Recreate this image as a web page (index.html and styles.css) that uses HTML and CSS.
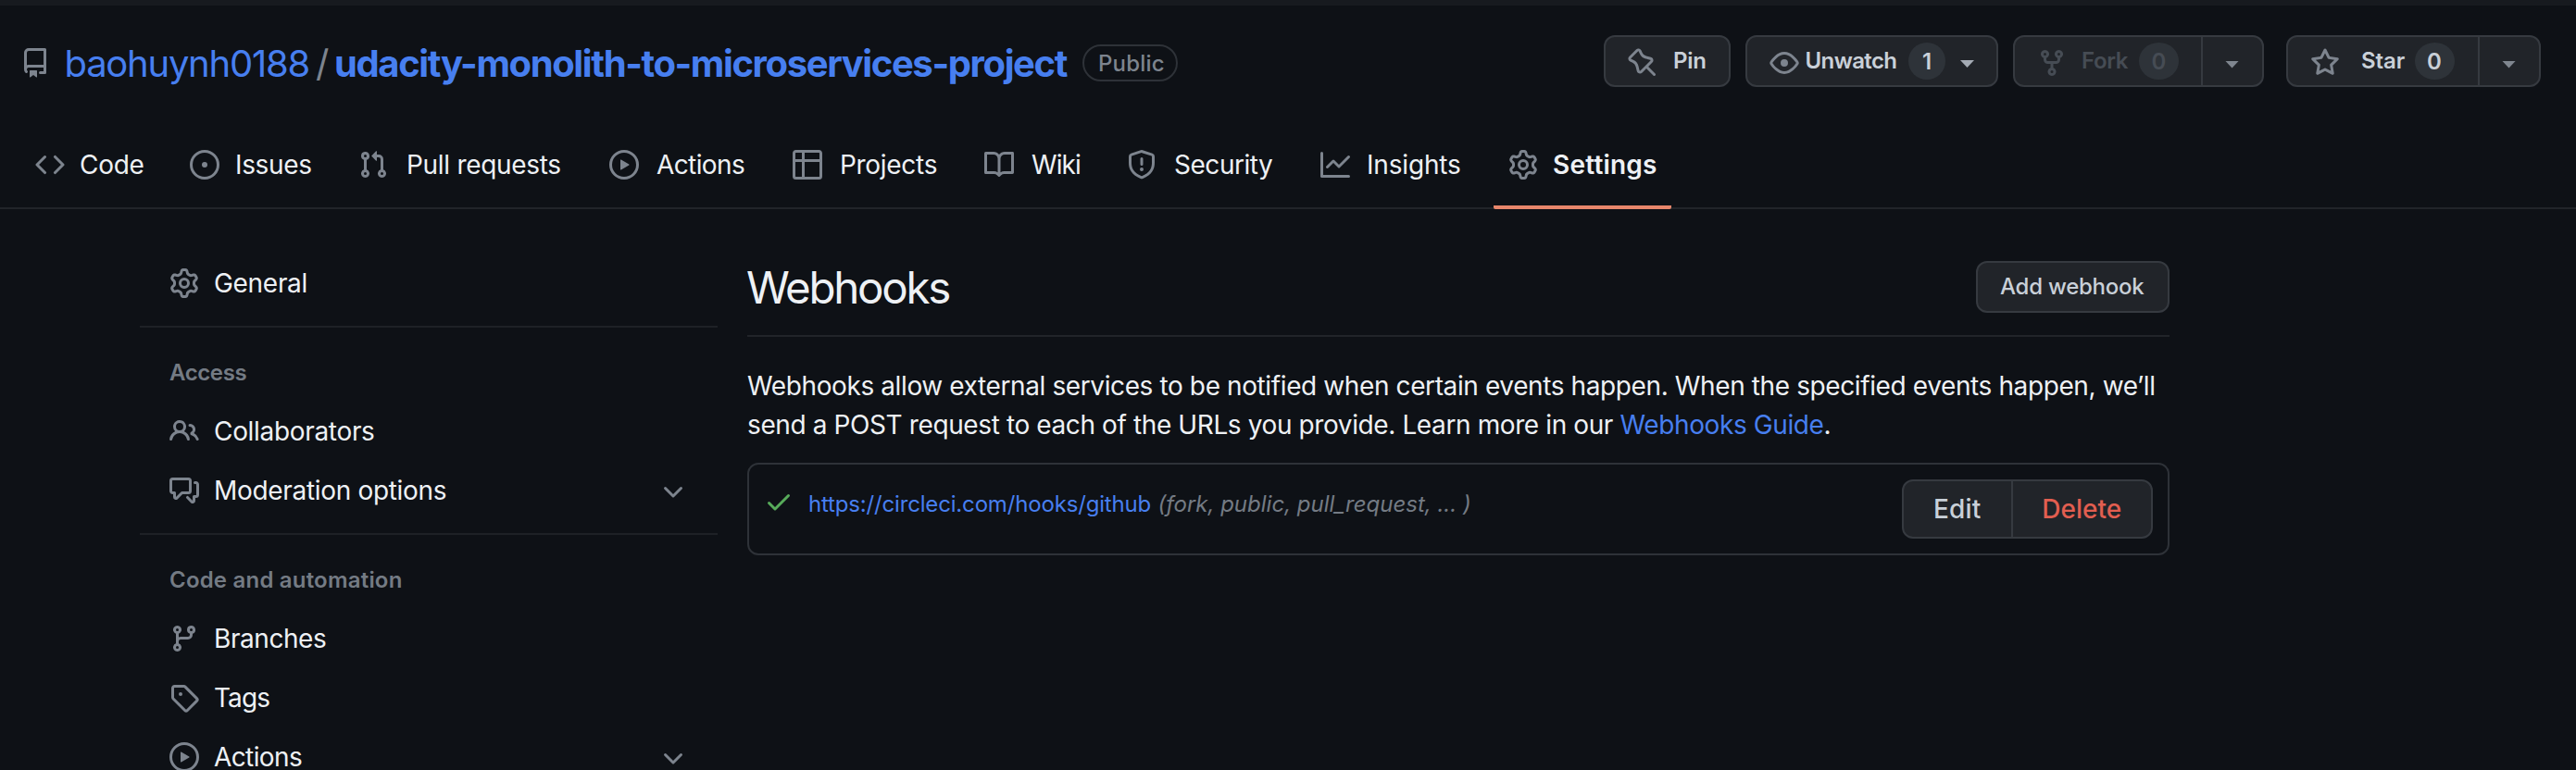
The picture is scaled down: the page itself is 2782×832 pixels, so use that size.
FILE: index.html
```html
<!DOCTYPE html>
<html lang="en">
<head>
<meta charset="utf-8">
<title>Webhooks settings</title>
<link rel="stylesheet" href="styles.css">
</head>
<body>
<svg class="sprite" aria-hidden="true">
  <symbol id="repo" viewBox="0 0 16 16"><path d="M2 2.5A2.5 2.5 0 014.5 0h8.75a.75.75 0 01.75.75v12.5a.75.75 0 01-.75.75h-2.5a.75.75 0 110-1.5h1.75v-2h-8a1 1 0 00-.714 1.7.75.75 0 01-1.072 1.05A2.495 2.495 0 012 11.5v-9zm10.5-1V9h-8c-.356 0-.694.074-1 .208V2.5a1 1 0 011-1h8zM5 12.25v3.25a.25.25 0 00.4.2l1.45-1.087a.25.25 0 01.3 0L8.6 15.7a.25.25 0 00.4-.2v-3.25a.25.25 0 00-.25-.25h-3.5a.25.25 0 00-.25.25z"/></symbol>
  <symbol id="code" viewBox="0 0 16 16"><path d="M4.72 3.22a.75.75 0 011.06 1.06L2.06 8l3.72 3.72a.75.75 0 11-1.06 1.06L.47 8.53a.75.75 0 010-1.06l4.25-4.25zm6.56 0a.75.75 0 10-1.06 1.06L13.94 8l-3.72 3.72a.75.75 0 101.06 1.06l4.25-4.25a.75.75 0 000-1.06l-4.25-4.25z"/></symbol>
  <symbol id="issue" viewBox="0 0 16 16"><path d="M8 9.5a1.5 1.5 0 100-3 1.5 1.5 0 000 3z"/><path d="M8 0a8 8 0 100 16A8 8 0 008 0zM1.5 8a6.5 6.5 0 1113 0 6.5 6.5 0 01-13 0z"/></symbol>
  <symbol id="pull" viewBox="0 0 16 16"><path d="M7.177 3.073L9.573.677A.25.25 0 0110 .854v4.792a.25.25 0 01-.427.177L7.177 3.427a.25.25 0 010-.354zM3.75 2.5a.75.75 0 100 1.5.75.75 0 000-1.5zm-2.25.75a2.25 2.25 0 113 2.122v5.256a2.251 2.251 0 11-1.5 0V5.372A2.25 2.25 0 011.5 3.25zM11 2.5h-1V4h1a1 1 0 011 1v5.628a2.251 2.251 0 101.5 0V5A2.5 2.5 0 0011 2.5zm1 10.25a.75.75 0 111.5 0 .75.75 0 01-1.5 0zM3.75 12a.75.75 0 100 1.5.75.75 0 000-1.5z"/></symbol>
  <symbol id="play" viewBox="0 0 16 16"><path d="M1.5 8a6.5 6.5 0 1113 0 6.5 6.5 0 01-13 0zM8 0a8 8 0 100 16A8 8 0 008 0zM6.379 5.227A.25.25 0 006 5.442v5.117a.25.25 0 00.379.214l4.264-2.559a.25.25 0 000-.428L6.379 5.227z"/></symbol>
  <symbol id="table" viewBox="0 0 16 16"><path d="M0 1.75C0 .784.784 0 1.75 0h12.5C15.216 0 16 .784 16 1.75v12.5A1.75 1.75 0 0114.25 16H1.75A1.75 1.75 0 010 14.25V1.75zM6.5 6.5v8h7.75a.25.25 0 00.25-.25V6.5h-8zm8-1.5V1.75a.25.25 0 00-.25-.25H6.5V5h8zm-13 1.5v7.75c0 .138.112.25.25.25H5v-8H1.5zM5 5V1.5H1.75a.25.25 0 00-.25.25V5H5z"/></symbol>
  <symbol id="book" viewBox="0 0 16 16"><path d="M0 1.75A.75.75 0 01.75 1h4.253c1.227 0 2.317.59 3 1.501A3.744 3.744 0 0111.006 1h4.245a.75.75 0 01.75.75v10.5a.75.75 0 01-.75.75h-4.507a2.25 2.25 0 00-1.591.659l-.622.621a.75.75 0 01-1.06 0l-.622-.621A2.25 2.25 0 005.258 13H.75a.75.75 0 01-.75-.75V1.75zm8.755 3a2.25 2.25 0 012.25-2.25H14.5v9h-3.757c-.71 0-1.4.201-1.992.572l.004-7.322zm-1.504 7.324l.004-5.073-.002-2.253A2.25 2.25 0 005.003 2.5H1.5v9h3.757a3.75 3.75 0 011.994.574z"/></symbol>
  <symbol id="shield" viewBox="0 0 16 16"><path d="M7.467.133a1.75 1.75 0 011.066 0l5.25 1.68A1.75 1.75 0 0115 3.48V7c0 1.566-.32 3.182-1.303 4.682-.983 1.498-2.585 2.813-5.032 3.855a1.7 1.7 0 01-1.33 0c-2.447-1.042-4.049-2.357-5.032-3.855C1.32 10.182 1 8.566 1 7V3.48a1.75 1.75 0 011.217-1.667l5.25-1.68zm.61 1.429a.25.25 0 00-.153 0l-5.25 1.68a.25.25 0 00-.174.238V7c0 1.358.275 2.666 1.057 3.86.784 1.194 2.121 2.34 4.366 3.297a.2.2 0 00.154 0c2.245-.956 3.582-2.104 4.366-3.298C13.225 9.666 13.5 8.36 13.5 7V3.48a.25.25 0 00-.174-.237l-5.25-1.68zM9 10.5a1 1 0 11-2 0 1 1 0 012 0zm-.25-5.75a.75.75 0 10-1.5 0v3a.75.75 0 001.5 0v-3z"/></symbol>
  <symbol id="graph" viewBox="0 0 16 16"><path d="M1.5 1.75a.75.75 0 00-1.5 0v12.5c0 .414.336.75.75.75h14.5a.75.75 0 000-1.5H1.5V1.75zm14.28 2.53a.75.75 0 00-1.06-1.06L10 7.94 7.53 5.47a.75.75 0 00-1.06 0L3.22 8.72a.75.75 0 001.06 1.06L7 7.06l2.47 2.47a.75.75 0 001.06 0l5.25-5.25z"/></symbol>
  <symbol id="gear" viewBox="0 0 16 16"><path d="M8 0a8.2 8.2 0 01.701.031C9.444.095 9.99.645 10.16 1.29l.288 1.107c.018.066.079.158.212.224.231.114.454.243.668.386.123.082.233.09.299.071l1.103-.303c.644-.176 1.392.021 1.82.63.27.385.506.792.704 1.218.315.675.111 1.422-.364 1.891l-.814.806c-.049.048-.098.147-.088.294.016.257.016.515 0 .772-.01.147.038.246.088.294l.814.806c.475.469.679 1.216.364 1.891a7.977 7.977 0 01-.704 1.217c-.428.61-1.176.807-1.82.63l-1.102-.302c-.067-.019-.177-.011-.3.071a5.909 5.909 0 01-.668.386c-.133.066-.194.158-.211.224l-.29 1.106c-.168.646-.715 1.196-1.458 1.26a8.006 8.006 0 01-1.402 0c-.743-.064-1.289-.614-1.458-1.26l-.289-1.106c-.018-.066-.079-.158-.212-.224a5.738 5.738 0 01-.668-.386c-.123-.082-.233-.09-.299-.071l-1.103.303c-.644.176-1.392-.021-1.82-.63a8.12 8.12 0 01-.704-1.218c-.315-.675-.111-1.422.363-1.891l.815-.806c.05-.048.098-.147.088-.294a6.214 6.214 0 010-.772c.01-.147-.038-.246-.088-.294l-.815-.806C.635 6.045.431 5.298.746 4.623a7.92 7.92 0 01.704-1.217c.428-.61 1.176-.807 1.82-.63l1.102.302c.067.019.177.011.3-.071.214-.143.437-.272.668-.386.133-.066.194-.158.211-.224l.29-1.106C6.009.645 6.556.095 7.299.03 7.53.01 7.764 0 8 0zm-.571 1.525c-.036.003-.108.036-.137.146l-.289 1.105c-.147.561-.549.967-.998 1.189-.173.086-.34.183-.5.29-.417.278-.97.423-1.529.27l-1.103-.303c-.109-.03-.175.016-.195.045-.22.312-.412.644-.573.99-.014.031-.021.11.059.19l.815.806c.411.406.562.957.53 1.456a4.709 4.709 0 000 .582c.032.499-.119 1.05-.53 1.456l-.815.806c-.081.08-.073.159-.059.19.162.346.353.677.573.989.02.03.085.076.195.046l1.102-.303c.56-.153 1.113-.008 1.53.27.161.107.328.204.501.29.447.222.85.629.997 1.189l.289 1.105c.029.109.101.143.137.146a6.6 6.6 0 001.142 0c.036-.003.108-.036.137-.146l.289-1.105c.147-.561.549-.967.998-1.189.173-.086.34-.183.5-.29.417-.278.97-.423 1.529-.27l1.103.303c.109.029.175-.016.195-.045.22-.313.411-.644.573-.99.014-.031.021-.11-.059-.19l-.815-.806c-.411-.406-.562-.957-.53-1.456a4.709 4.709 0 000-.582c-.032-.499.119-1.05.53-1.456l.815-.806c.081-.08.073-.159.059-.19a6.464 6.464 0 00-.573-.989c-.02-.03-.085-.076-.195-.046l-1.102.303c-.56.153-1.113.008-1.53-.27a4.44 4.44 0 00-.501-.29c-.447-.222-.85-.629-.997-1.189l-.289-1.105c-.029-.11-.101-.143-.137-.146a6.6 6.6 0 00-1.142 0zM11 8a3 3 0 11-6 0 3 3 0 016 0zM9.5 8a1.5 1.5 0 11-3.001.001A1.5 1.5 0 019.5 8z"/></symbol>
  <symbol id="pin" viewBox="0 0 16 16"><path d="M4.456.734a1.75 1.75 0 012.826.504l.613 1.327a3.081 3.081 0 002.084 1.707l2.454.584c1.332.317 1.8 1.972.832 2.94L11.06 10l3.72 3.72a.75.75 0 11-1.061 1.06L10 11.06l-2.204 2.205c-.968.968-2.623.5-2.94-.832l-.584-2.454a3.081 3.081 0 00-1.707-2.084l-1.327-.613a1.75 1.75 0 01-.504-2.826L4.456.734zM5.92 1.866a.25.25 0 00-.404-.072L1.794 5.516a.25.25 0 00.072.404l1.328.613A4.582 4.582 0 015.73 9.63l.584 2.454a.25.25 0 00.42.12l5.47-5.47a.25.25 0 00-.12-.42L9.63 5.73a4.581 4.581 0 01-3.098-2.537L5.92 1.866z"/></symbol>
  <symbol id="eye" viewBox="0 0 16 16"><path d="M1.679 7.932c.412-.621 1.242-1.75 2.366-2.717C5.175 4.242 6.527 3.5 8 3.5c1.473 0 2.824.742 3.955 1.715 1.124.967 1.954 2.096 2.366 2.717a.119.119 0 010 .136c-.412.621-1.242 1.75-2.366 2.717C10.825 11.758 9.473 12.5 8 12.5c-1.473 0-2.824-.742-3.955-1.715C2.92 9.818 2.09 8.69 1.679 8.068a.119.119 0 010-.136zM8 2c-1.981 0-3.67.992-4.933 2.078C1.797 5.169.88 6.423.43 7.1a1.619 1.619 0 000 1.798c.45.678 1.367 1.932 2.637 3.024C4.329 13.008 6.019 14 8 14c1.981 0 3.67-.992 4.933-2.078 1.27-1.091 2.187-2.345 2.637-3.023a1.619 1.619 0 000-1.798c-.45-.678-1.367-1.932-2.637-3.023C11.671 2.992 9.981 2 8 2zm0 8a2 2 0 100-4 2 2 0 000 4z"/></symbol>
  <symbol id="fork" viewBox="0 0 16 16"><path d="M5 3.25a.75.75 0 11-1.5 0 .75.75 0 011.5 0zm0 2.122a2.25 2.25 0 10-1.5 0v.878A2.25 2.25 0 005.75 8.5h1.5v2.128a2.251 2.251 0 101.5 0V8.5h1.5a2.25 2.25 0 002.25-2.25v-.878a2.25 2.25 0 10-1.5 0v.878a.75.75 0 01-.75.75h-4.5A.75.75 0 015 6.25v-.878zm3.75 7.378a.75.75 0 11-1.5 0 .75.75 0 011.5 0zm3-8.75a.75.75 0 100-1.5.75.75 0 000 1.5z"/></symbol>
  <symbol id="star" viewBox="0 0 16 16"><path d="M8 .25a.75.75 0 01.673.418l1.882 3.815 4.21.612a.75.75 0 01.416 1.279l-3.046 2.97.719 4.192a.75.75 0 01-1.088.791L8 12.347l-3.766 1.98a.75.75 0 01-1.088-.79l.72-4.194L.818 6.374a.75.75 0 01.416-1.28l4.21-.611L7.327.668A.75.75 0 018 .25zm0 2.445L6.615 5.5a.75.75 0 01-.564.41l-3.097.45 2.24 2.184a.75.75 0 01.216.664l-.528 3.084 2.769-1.456a.75.75 0 01.698 0l2.77 1.456-.53-3.084a.75.75 0 01.216-.664l2.24-2.183-3.096-.45a.75.75 0 01-.564-.41L8 2.694v.001z"/></symbol>
  <symbol id="people" viewBox="0 0 16 16"><path d="M5.5 3.5a2 2 0 100 4 2 2 0 000-4zM2 5.5a3.5 3.5 0 115.898 2.549 5.507 5.507 0 013.034 4.084.75.75 0 11-1.482.235 4.001 4.001 0 00-7.9 0 .75.75 0 01-1.482-.236A5.507 5.507 0 013.102 8.05 3.49 3.49 0 012 5.5zM11 4a.75.75 0 100 1.5 1.5 1.5 0 01.666 2.844.75.75 0 00-.416.672v.352a.75.75 0 00.574.73c1.2.289 2.162 1.2 2.522 2.372a.75.75 0 101.434-.44 5.01 5.01 0 00-2.56-3.012A3 3 0 0011 4z"/></symbol>
  <symbol id="comments" viewBox="0 0 16 16"><path d="M1.5 2.75a.25.25 0 01.25-.25h8.5a.25.25 0 01.25.25v5.5a.25.25 0 01-.25.25h-3.5a.75.75 0 00-.53.22L3.5 11.44V9.25a.75.75 0 00-.75-.75h-1a.25.25 0 01-.25-.25v-5.5zM1.75 1A1.75 1.75 0 000 2.75v5.5C0 9.216.784 10 1.75 10H2v1.543a1.457 1.457 0 002.487 1.03L7.061 10h3.189A1.75 1.75 0 0012 8.25v-5.5A1.75 1.75 0 0010.25 1h-8.5zM14.5 4.75a.25.25 0 00-.25-.25h-.5a.75.75 0 110-1.5h.5c.966 0 1.75.784 1.75 1.75v5.5A1.75 1.75 0 0114.25 12H14v1.543a1.457 1.457 0 01-2.487 1.03L9.22 12.28a.75.75 0 111.06-1.06l2.22 2.22v-2.19a.75.75 0 01.75-.75h1a.25.25 0 00.25-.25v-5.5z"/></symbol>
  <symbol id="branch" viewBox="0 0 16 16"><path d="M11.75 2.5a.75.75 0 100 1.5.75.75 0 000-1.5zm-2.25.75a2.25 2.25 0 113 2.122V6A2.5 2.5 0 0110 8.5H6a1 1 0 00-1 1v1.128a2.251 2.251 0 11-1.5 0V5.372a2.25 2.25 0 111.5 0v1.836A2.492 2.492 0 016 7h4a1 1 0 001-1v-.628A2.25 2.25 0 019.5 3.25zM4.25 12a.75.75 0 100 1.5.75.75 0 000-1.5zM3.5 3.25a.75.75 0 111.5 0 .75.75 0 01-1.5 0z"/></symbol>
  <symbol id="tag" viewBox="0 0 16 16"><path d="M2.5 7.775V2.75a.25.25 0 01.25-.25h5.025a.25.25 0 01.177.073l6.25 6.25a.25.25 0 010 .354l-5.025 5.025a.25.25 0 01-.354 0l-6.25-6.25a.25.25 0 01-.073-.177zm-1.5 0V2.75C1 1.784 1.784 1 2.75 1h5.025c.464 0 .91.184 1.238.513l6.25 6.25a1.75 1.75 0 010 2.474l-5.026 5.026a1.75 1.75 0 01-2.474 0l-6.25-6.25A1.75 1.75 0 011 7.775zM6 5a1 1 0 100 2 1 1 0 000-2z"/></symbol>
  <symbol id="check" viewBox="0 0 16 16"><path d="M13.78 4.22a.75.75 0 010 1.06l-7.25 7.25a.75.75 0 01-1.06 0L2.22 9.28a.75.75 0 011.06-1.06L6 10.94l6.72-6.72a.75.75 0 011.06 0z"/></symbol>
  <symbol id="chevron" viewBox="0 0 16 16"><path d="M12.78 6.22a.75.75 0 010 1.06l-4.25 4.25a.75.75 0 01-1.06 0L3.22 7.28a.75.75 0 011.06-1.06L8 9.94l3.72-3.72a.75.75 0 011.06 0z"/></symbol>
</svg>

<div class="top-strip"></div>

<header class="repo-header">
  <div class="repo-title">
    <svg class="icon"><use href="#repo"/></svg>
    <a class="owner" href="#">baohuynh0188</a>
    <span class="slash">/</span>
    <a class="repo-name" href="#">udacity-monolith-to-microservices-project</a>
    <span class="visibility">Public</span>
  </div>
  <div class="repo-actions">
    <button class="btn btn-pin"><svg class="icon"><use href="#pin"/></svg><span>Pin</span></button>
    <button class="btn btn-watch"><svg class="icon"><use href="#eye"/></svg><span>Unwatch</span><span class="counter">1</span><i class="caret"></i></button>
    <div class="btn btn-fork"><svg class="icon"><use href="#fork"/></svg><span>Fork</span><span class="counter">0</span><span class="split"><i class="caret"></i></span></div>
    <div class="btn btn-star"><svg class="icon"><use href="#star"/></svg><span>Star</span><span class="counter">0</span><span class="split"><i class="caret"></i></span></div>
  </div>
</header>

<nav class="tabs">
  <a class="tab tab-code" href="#"><svg class="icon"><use href="#code"/></svg><span>Code</span></a>
  <a class="tab tab-issues" href="#"><svg class="icon"><use href="#issue"/></svg><span>Issues</span></a>
  <a class="tab tab-pulls" href="#"><svg class="icon"><use href="#pull"/></svg><span>Pull requests</span></a>
  <a class="tab tab-actions" href="#"><svg class="icon"><use href="#play"/></svg><span>Actions</span></a>
  <a class="tab tab-projects" href="#"><svg class="icon"><use href="#table"/></svg><span>Projects</span></a>
  <a class="tab tab-wiki" href="#"><svg class="icon"><use href="#book"/></svg><span>Wiki</span></a>
  <a class="tab tab-security" href="#"><svg class="icon"><use href="#shield"/></svg><span>Security</span></a>
  <a class="tab tab-insights" href="#"><svg class="icon"><use href="#graph"/></svg><span>Insights</span></a>
  <a class="tab tab-settings selected" href="#"><svg class="icon"><use href="#gear"/></svg><span>Settings</span></a>
</nav>

<div class="layout">
  <aside class="sidebar">
    <a class="item" href="#"><svg class="icon"><use href="#gear"/></svg><span class="t-general">General</span></a>
    <section class="group">
      <h3 class="group-title t-access">Access</h3>
      <a class="item" href="#"><svg class="icon"><use href="#people"/></svg><span>Collaborators</span></a>
      <a class="item" href="#"><svg class="icon"><use href="#comments"/></svg><span>Moderation options</span><svg class="icon chevron"><use href="#chevron"/></svg></a>
    </section>
    <section class="group">
      <h3 class="group-title t-automation">Code and automation</h3>
      <a class="item" href="#"><svg class="icon"><use href="#branch"/></svg><span class="t-branches">Branches</span></a>
      <a class="item" href="#"><svg class="icon"><use href="#tag"/></svg><span class="t-tags">Tags</span></a>
      <a class="item" href="#"><svg class="icon"><use href="#play"/></svg><span class="t-actions">Actions</span><svg class="icon chevron"><use href="#chevron"/></svg></a>
    </section>
  </aside>

  <main class="content">
    <div class="subhead">
      <h2 class="title">Webhooks</h2>
      <button class="btn btn-add">Add webhook</button>
    </div>
    <p class="intro">Webhooks allow external services to be notified when certain events happen. When the specified events happen, we’ll<br>send a POST request to each of the URLs you provide. Learn more in our <a href="#">Webhooks Guide</a>.</p>
    <div class="hook">
      <svg class="icon check"><use href="#check"/></svg>
      <a class="hook-url" href="#">https://circleci.com/hooks/github</a>
      <em class="hook-events">(fork, public, pull_request, ... )</em>
      <div class="hook-buttons"><button class="edit">Edit</button><button class="delete">Delete</button></div>
    </div>
  </main>
</div>
</body>
</html>
```
FILE: styles.css
```css
* { box-sizing: border-box; }

html, body { height: 100%; }

body {
  margin: 0;
  overflow: hidden;
  background: #0e1116;
  color: #eef1f5;
  font: 400 28px/42px Inter, "Liberation Sans", sans-serif;
  white-space: nowrap;
}

a { color: #477ff0; text-decoration: none; }
h2, h3, p { margin: 0; }
button { font-family: inherit; padding: 0; }

.sprite { display: none; }
.icon { display: block; flex: none; width: 32px; height: 32px; fill: #7d848e; fill-rule: evenodd; }

.top-strip { height: 6px; background: #171a1f; }

/* Repository header */
.repo-header {
  display: flex;
  justify-content: space-between;
  height: 120px;
  padding: 32px 38px 0 22px;
}

.repo-title { display: flex; align-items: center; height: 62px; font-size: 40px; line-height: 60px; }
.repo-title .icon { margin: 0 15.5px 2px 0; }
.owner { width: 271.5px; letter-spacing: -1.25px; }
.slash { width: 20px; color: #7d848e; }
.repo-name { width: 808px; font-weight: 700; letter-spacing: -1.38px; }

.visibility {
  height: 40px;
  width: 103px;
  border: 2px solid #2e3238;
  border-radius: 20px;
  padding-left: 15px;
  margin-bottom: 2px;
  color: #7d848e;
  font-weight: 500;
  font-size: 24px;
  line-height: 38px;
  letter-spacing: .2px;
}

.repo-actions { display: flex; align-items: flex-start; }

.btn {
  display: grid;
  align-items: center;
  height: 56px;
  border: 2px solid #363a40;
  border-radius: 12px;
  background: #212429;
  color: #c9d0d8;
  font-weight: 600;
  font-size: 24px;
  line-height: 38px;
  text-align: left;
}

.btn .icon { margin-top: 3px; }
.btn-pin { width: 137px; margin-right: 16px; padding-left: 24px; grid-template-columns: 49px auto; letter-spacing: -.2px; }
.btn-watch { width: 273px; margin-right: 16px; padding-left: 24px; grid-template-columns: 38.5px 111.5px 56px auto; letter-spacing: -.6px; }
.btn-fork { width: 271px; margin-right: 24px; padding-left: 24px; grid-template-columns: 48px 62px 67px auto; letter-spacing: -.4px; color: #464c54; }
.btn-star { width: 275px; padding-left: 24px; grid-template-columns: 55px 57.5px 68.5px auto; letter-spacing: -.1px; }
.btn-fork > .icon { fill: #464c54; }
.btn-watch .caret { background: #a4abb4; margin-top: 6px; }

.counter {
  width: 43px;
  height: 40px;
  border-radius: 50%;
  background: #2e3339;
  line-height: 42px;
  text-align: center;
  letter-spacing: 0;
}

.btn-watch .counter { width: 40px; }

.caret { width: 15px; height: 8px; background: #7f868f; clip-path: polygon(0 0, 100% 0, 50% 100%); }
.split { display: flex; align-items: center; height: 52px; padding: 7px 0 0 24px; border-left: 2px solid #363a40; }

/* Tabs */
.tabs {
  display: grid;
  grid-template-columns: 167px 182px 271px 198px 207px 154px 209px 203px 192px;
  height: 100px;
  padding-left: 22px;
  border-bottom: 2px solid #212429;
}

.tab {
  display: flex;
  gap: 19px;
  align-items: center;
  height: 100px;
  padding: 4px 0 0 16px;
  color: inherit;
  letter-spacing: -.3px;
}

.tab-code { gap: 16px; }
.tab-issues { gap: 17px; letter-spacing: -.35px; }
.tab-pulls { gap: 20px; }
.tab-actions { gap: 19px; letter-spacing: -.6px; }
.tab-wiki { letter-spacing: -.9px; }
.tab-security { letter-spacing: -.47px; }
.tab-insights { gap: 18px; letter-spacing: -.18px; }
.tab-settings { gap: 16px; letter-spacing: .2px; font-weight: 600; }
.selected { background: linear-gradient(#e8866b, #e8866b) bottom / 100% 4px no-repeat; border-radius: 2px; }

/* Page body */
.layout { display: flex; padding-left: 151px; }

.sidebar { width: 624px; margin-right: 32px; padding-top: 48px; }
.item { display: flex; align-items: center; height: 64px; padding-left: 32px; color: inherit; letter-spacing: -.32px; }
.item .icon { margin-right: 16px; }
.item .chevron { margin: 0 32px 0 auto; }
.t-general { letter-spacing: -.3px; }
.t-branches { letter-spacing: -.43px; }
.t-tags { letter-spacing: -.9px; }
.t-actions { letter-spacing: -.6px; }

.group { border-top: 2px solid #1e2126; }
.sidebar > .item + .group { margin-top: 14px; }
.group + .group { margin-top: 14px; }
.group-title { height: 80px; padding: 31px 0 0 32px; color: #747b84; font-weight: 600; font-size: 24px; line-height: 36px; }
.t-access { letter-spacing: -.4px; }
.t-automation { letter-spacing: .2px; }

.content { width: 1536px; padding-top: 56px; }
.subhead { display: flex; justify-content: space-between; height: 82px; border-bottom: 2px solid #212429; }
.title { font-weight: 400; font-size: 47.5px; line-height: 58px; letter-spacing: -2.3px; text-indent: -1px; }
.btn-add { width: 209px; padding-left: 24px; font-weight: 500; letter-spacing: -.25px; }
.intro { padding: 32px 0 0; height: 136px; letter-spacing: -.39px; }

.hook {
  display: flex;
  height: 100px;
  padding: 16px;
  border: 2px solid #2e3238;
  border-radius: 12px;
  font-size: 24px;
  line-height: 36px;
}

.check { margin: 8px 16px 0 0; fill: #57ab5a; }
.hook-url { width: 377.5px; padding-top: 9px; letter-spacing: -.17px; }
.hook-events { padding-top: 9px; color: #747b84; }

.hook-buttons {
  display: flex;
  width: 271px;
  height: 64px;
  margin-left: auto;
  border: 2px solid #363a40;
  border-radius: 12px;
  background: #212429;
}

.hook-buttons button { border: 0; background: none; font-weight: 500; font-size: 28px; text-align: center; }
.hook-buttons .edit { width: 115.5px; color: #c9d0d8; letter-spacing: .2px; }
.hook-buttons .delete { flex: 1; border-left: 2px solid #363a40; color: #e25e50; }
```
